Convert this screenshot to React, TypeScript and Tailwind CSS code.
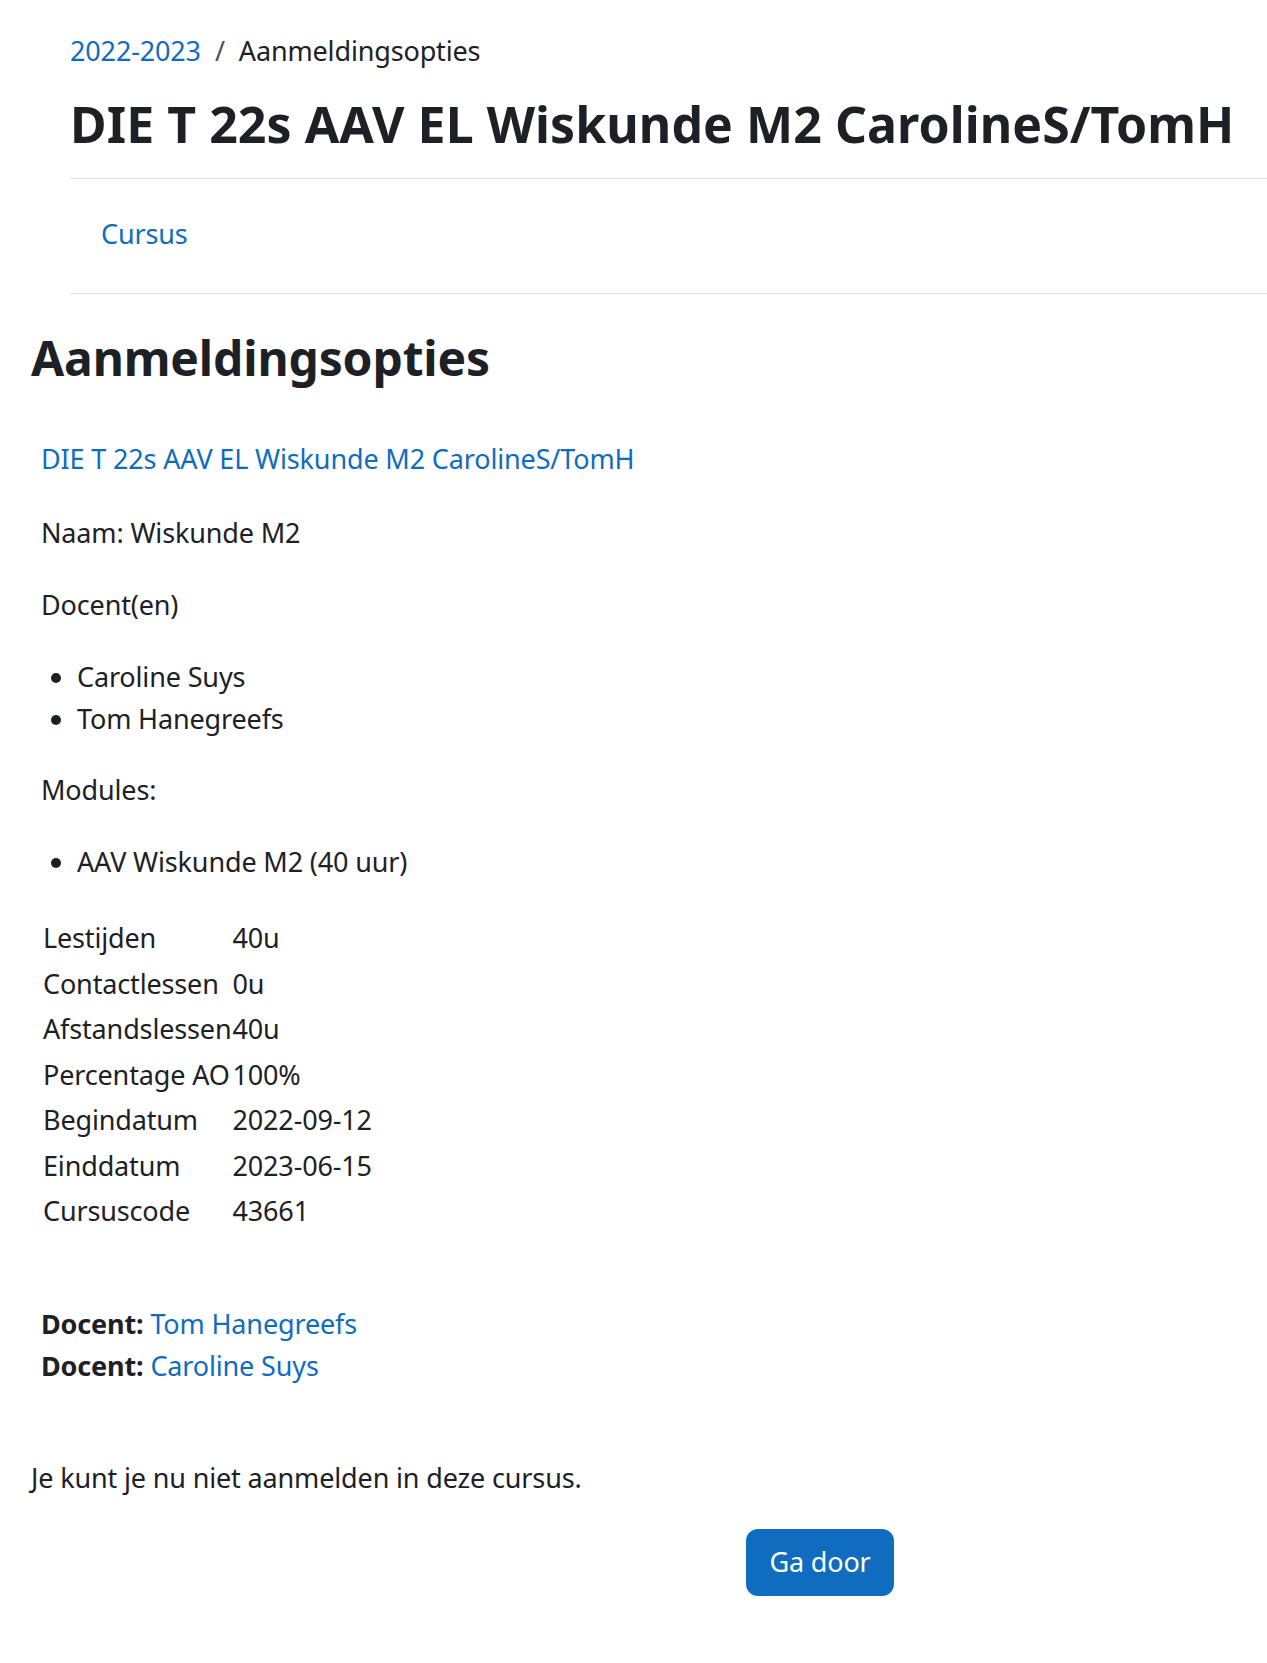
const font = { fontFamily: '"Noto Sans", "Open Sans", sans-serif' };

const rows: [string, string][] = [
  ["Lestijden", "40u"],
  ["Contactlessen", "0u"],
  ["Afstandslessen", "40u"],
  ["Percentage AO", "100%"],
  ["Begindatum", "2022-09-12"],
  ["Einddatum", "2023-06-15"],
  ["Cursuscode", "43661"],
];

export default function App() {
  return (
    <div
      className="min-h-[1663px] w-full bg-white text-[#1d2125] text-[27px] leading-[42px] tracking-[-0.15px]"
      style={font}
    >
      {/* page header */}
      <header className="pl-[70px] pt-[30px]">
        <nav className="flex items-center">
          <a href="#" className="text-[#0f6cbf]">2022-2023</a>
          <span className="px-[14px] text-[#4b5258]">/</span>
          <span>Aanmeldingsopties</span>
        </nav>
        <h1 className="mt-[20px] whitespace-nowrap text-[50px] leading-[65px] font-bold tracking-[0.05px]">
          DIE T 22s AAV EL Wiskunde M2 CarolineS/TomH
        </h1>
        <div className="mt-[21px] border-t border-[#dee2e6]" />
        <div className="pl-[31px] pt-[34px] pb-[38px]">
          <a href="#" className="text-[#0f6cbf]">Cursus</a>
        </div>
        <div className="border-t border-[#dee2e6]" />
      </header>

      <main className="pl-[31px]">
        <h2 className="mt-[34px] text-[48px] leading-[60px] font-bold">Aanmeldingsopties</h2>

        <div className="pl-[10px]">
          <a href="#" className="mt-[50px] block text-[#0f6cbf]">DIE T 22s AAV EL Wiskunde M2 CarolineS/TomH</a>
          <p className="mt-[32px]">Naam: Wiskunde M2</p>
          <p className="mt-[30px]">Docent(en)</p>
          <ul className="mt-[30px] list-disc pl-[36px]">
            <li>Caroline Suys</li>
            <li>Tom Hanegreefs</li>
          </ul>
          <p className="mt-[29px]">Modules:</p>
          <ul className="mt-[30px] list-disc pl-[36px]">
            <li>AAV Wiskunde M2 (40 uur)</li>
          </ul>

          <div className="mt-[32px] grid grid-cols-[auto_auto] justify-start pl-[2px] leading-[45.5px]">
            {rows.map(([k, v]) => (
              <div key={k} className="contents">
                <div className="whitespace-nowrap pr-[1px]">{k}</div>
                <div>{v}</div>
              </div>
            ))}
          </div>

          <div className="mt-[69px]">
            <div><b>Docent:</b> <a href="#" className="text-[#0f6cbf]">Tom Hanegreefs</a></div>
            <div><b>Docent:</b> <a href="#" className="text-[#0f6cbf]">Caroline Suys</a></div>
          </div>
        </div>

        <p className="mt-[70px]">Je kunt je nu niet aanmelden in deze cursus.</p>

        <div className="mt-[30px] flex pl-[715px]">
          <button className="h-[67px] w-[148px] rounded-[12px] bg-[#0f6cbf] text-white">Ga door</button>
        </div>
      </main>
    </div>
  );
}
